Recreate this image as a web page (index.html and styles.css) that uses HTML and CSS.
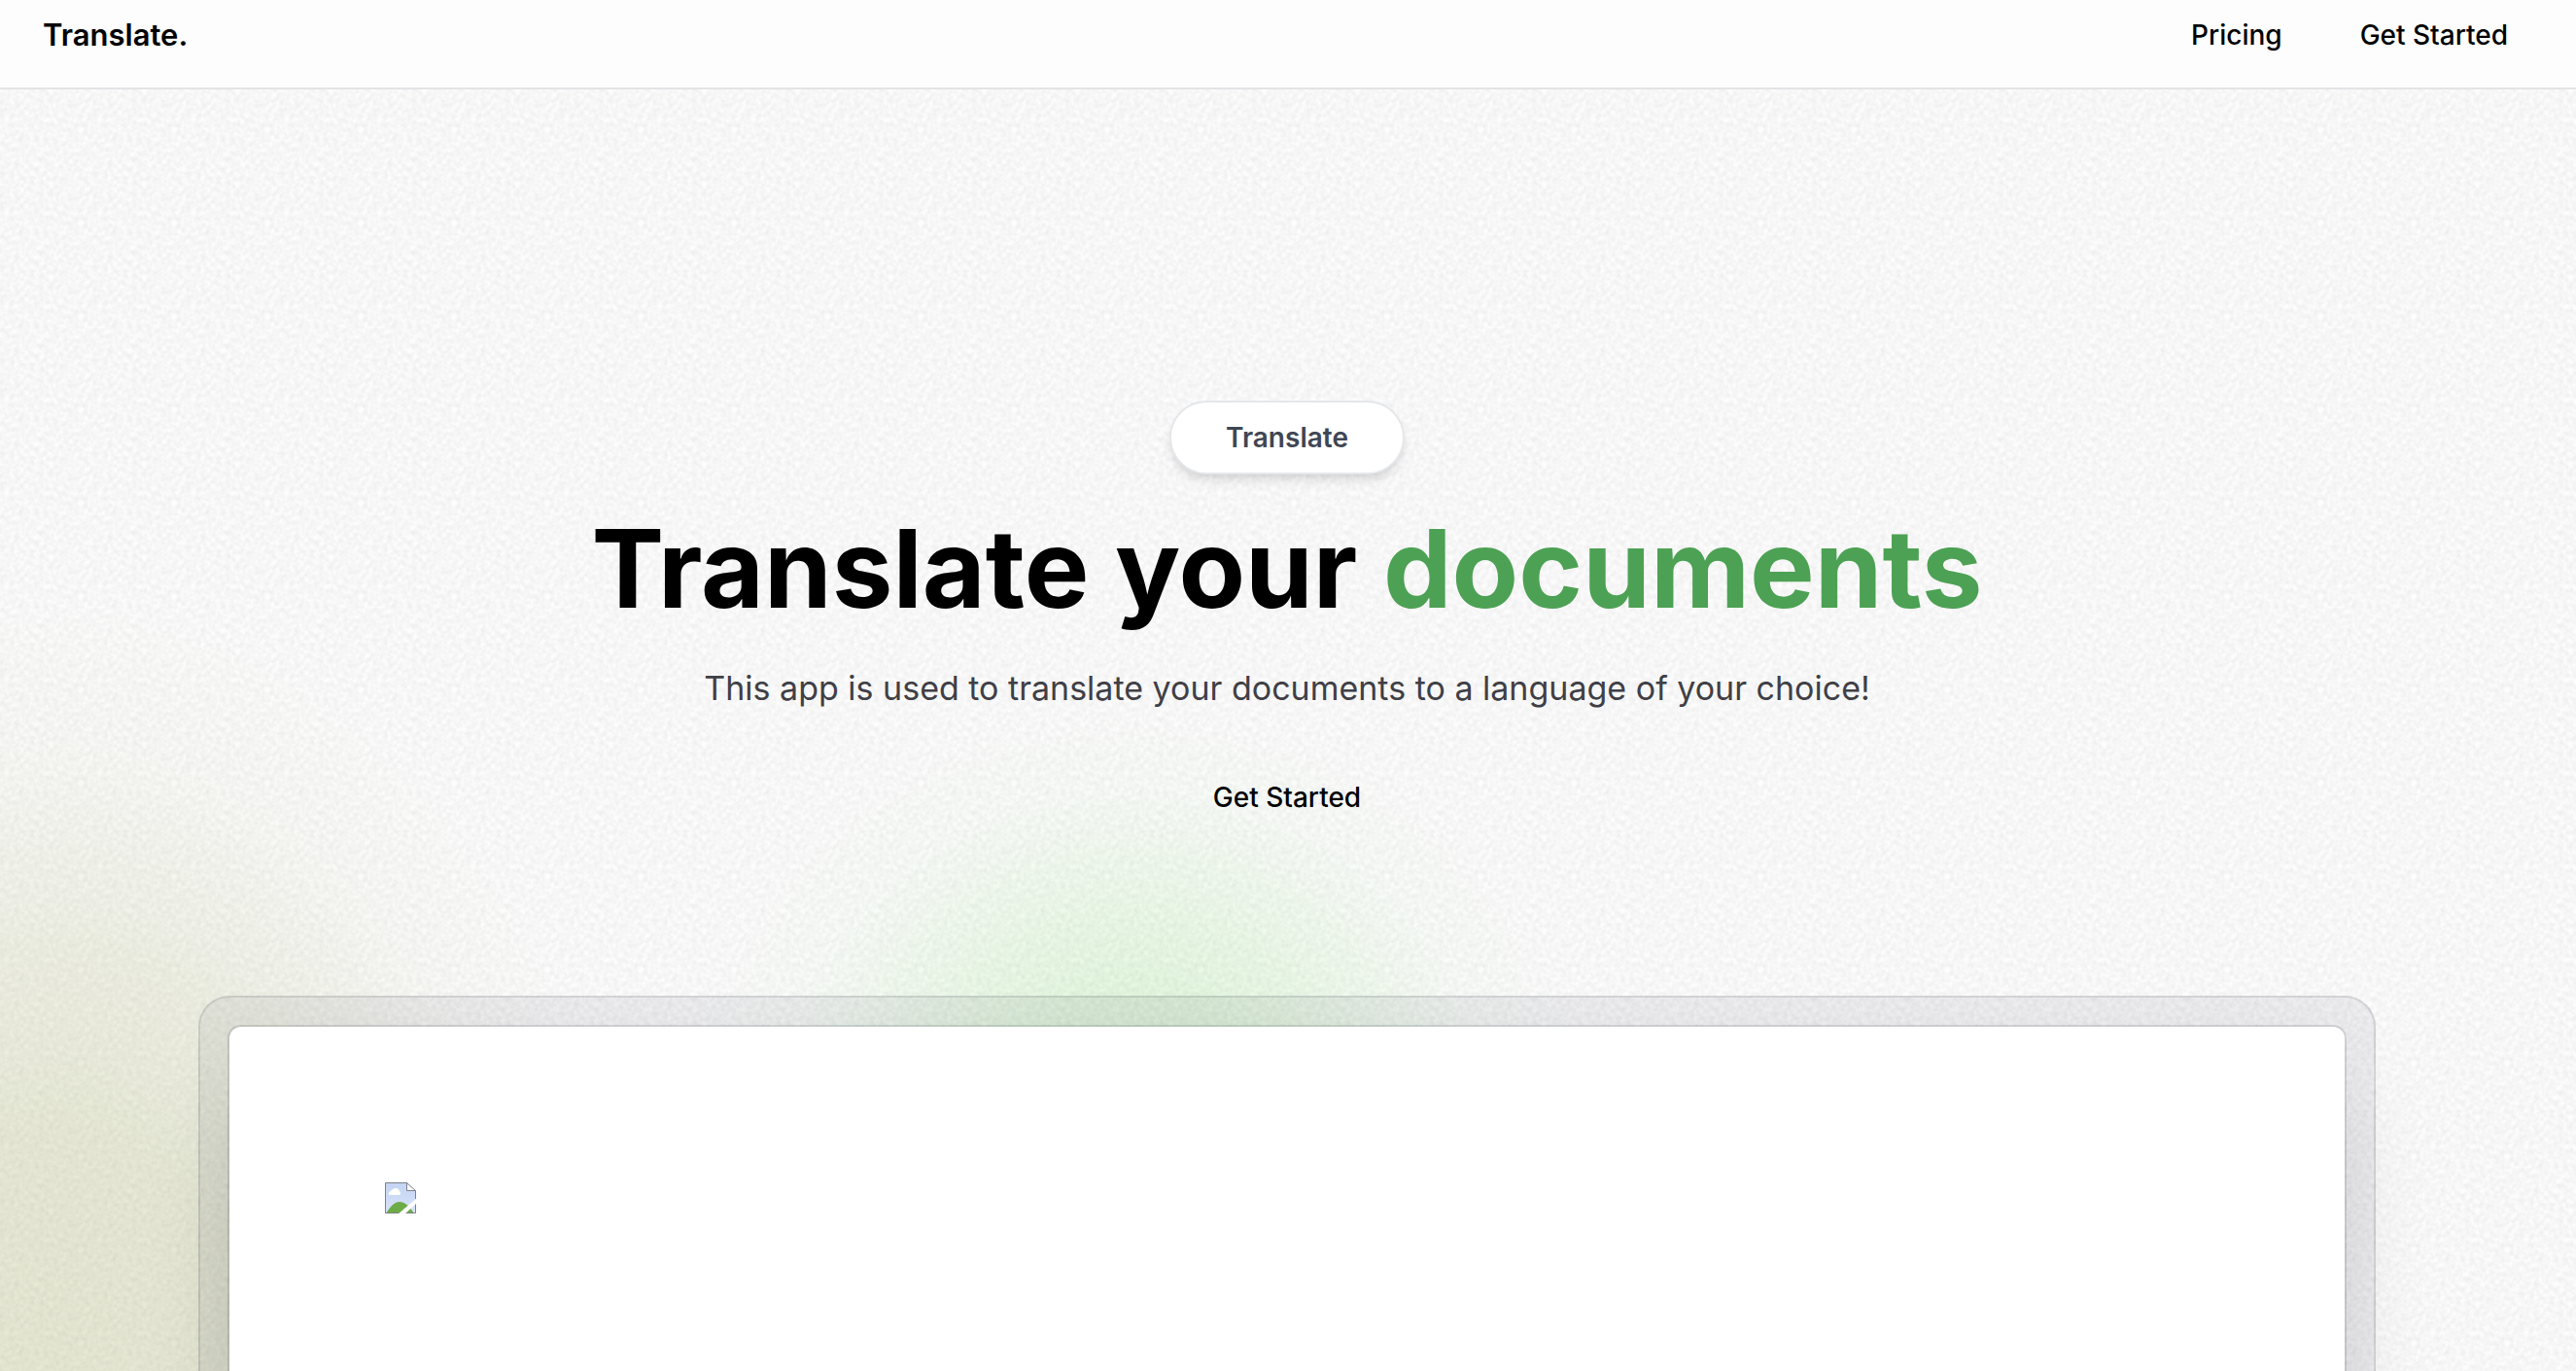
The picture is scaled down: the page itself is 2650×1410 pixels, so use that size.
FILE: index.html
```html
<!DOCTYPE html>
<html lang="en">
<head>
  <meta charset="utf-8">
  <meta name="viewport" content="width=device-width, initial-scale=1">
  <title>Translate.</title>
  <link rel="stylesheet" href="styles.css">
</head>
<body>
  <div class="page">
    <header class="navbar">
      <a class="logo" href="#">Translate.</a>
      <nav class="nav-links">
        <a class="button" href="#pricing">Pricing</a>
        <a class="button" href="#start">Get Started</a>
      </nav>
    </header>
    <main class="hero">
      <p class="pill">Translate</p>
      <h1 class="title">Translate your <span class="accent">documents</span></h1>
      <p class="subtitle">This app is used to translate your documents to a language of your choice!</p>
      <a class="button hero-button" href="#start">Get Started</a>
      <section class="frame" aria-label="Product preview">
        <div class="preview">
          <svg class="missing-image" viewBox="0 0 32 32" role="img" aria-label="Product preview image">
            <defs>
              <linearGradient id="sky" x1="0" y1="0" x2="0" y2="1">
                <stop offset="0" stop-color="#c3d3f3"/>
                <stop offset="1" stop-color="#d9e4fa"/>
              </linearGradient>
            </defs>
            <path d="M0 0H22L32 9V32H0Z" fill="url(#sky)"/>
            <path d="M1 32C6 24 10 20 15 20S25 24 30 32Z" fill="#6cab46"/>
            <path d="M4 13A3 3 0 0 1 6 9Q8 6 11 6Q14 6 15 9Q17 11 15 13Z" fill="#fff"/>
            <path d="M22 1L31 8H22Z" fill="#fff"/>
            <path d="M.5 31.500V.5H22.500L31.500 8.500V31.500Z M22.500 .5V8.500H31.500" fill="none" stroke="#7d8189"/>
            <path d="M13 33L33 16V21L20 33Z" fill="#fff"/>
          </svg>
        </div>
      </section>
    </main>
  </div>
</body>
</html>
```
FILE: styles.css
```css
* {
  box-sizing: border-box;
}

body {
  margin: 0;
  font-family: Inter, "Liberation Sans", sans-serif;
  color: #000;
}

a {
  color: inherit;
  text-decoration: none;
}

.page {
  display: flex;
  flex-direction: column;
  min-height: 100vh;
  overflow: hidden;
  background:
    url("data:image/svg+xml,%3Csvg xmlns='http://www.w3.org/2000/svg' width='96' height='96'%3E%3Cfilter id='n' x='0' y='0' width='100%25' height='100%25' color-interpolation-filters='sRGB'%3E%3CfeTurbulence type='fractalNoise' baseFrequency='.2' numOctaves='2' stitchTiles='stitch'/%3E%3CfeColorMatrix values='0 0 0 0 0 0 0 0 0 0 0 0 0 0 0 .09 0 0 0 -.02'/%3E%3C/filter%3E%3Crect width='96' height='96' filter='url(%23n)'/%3E%3C/svg%3E"),
    radial-gradient(460px 400px at 44% 1120px, rgb(200 243 190 / 56%), rgb(200 243 190 / 46%) 25%, rgb(200 243 190 / 28%) 50%, rgb(200 243 190 / 8%) 75%, transparent),
    radial-gradient(600px 780px at 2% 1400px, rgb(212 216 178 / 55%), rgb(212 216 178 / 50%) 30%, rgb(212 216 178 / 32%) 55%, rgb(212 216 178 / 8%) 80%, transparent),
    #fdfdfd;
}

.navbar {
  display: flex;
  justify-content: space-between;
  align-items: flex-start;
  height: 92px;
  padding: 16px 70px 0 44px;
  background: #fdfdfd;
  border-bottom: 2px solid #e4e4e7;
}

.logo {
  font-size: 31px;
  line-height: 40px;
  font-weight: 600;
}

.nav-links {
  display: flex;
  gap: 80px;
}

.button {
  font-size: 28px;
  line-height: 40px;
  font-weight: 500;
}

.hero {
  flex: 1;
  display: flex;
  flex-direction: column;
  align-items: center;
  padding: 320px 206px 0 204px;
}

.pill {
  margin: 0;
  padding: 16px 56px;
  border: 2px solid #e5e7eb;
  border-radius: 40px;
  background: #fff;
  box-shadow: 0 8px 12px -2px rgb(0 0 0 / 10%), 0 4px 8px -4px rgb(0 0 0 / 10%);
  font-size: 28px;
  line-height: 40px;
  font-weight: 600;
  color: #3f4654;
}

.title {
  margin: 36px 0 0;
  font-size: 112px;
  line-height: 120px;
  font-weight: 700;
}

.accent {
  color: #4da154;
}

.subtitle {
  margin: 36px 0 0;
  font-size: 34px;
  line-height: 56px;
  color: #3f3f46;
}

.hero-button {
  margin-top: 64px;
}

.frame {
  flex: 1;
  align-self: stretch;
  display: flex;
  margin: 184px 0 -160px;
  padding: 32px;
  border-radius: 32px;
  background: rgb(24 24 48 / 6%);
  box-shadow: inset 0 0 0 2px rgb(17 24 39 / 10%);
}

.preview {
  flex: 1;
  padding: 160px;
  border-radius: 12px;
  background: #fff;
  box-shadow: 0 0 0 2px rgb(17 24 39 / 12%), 0 50px 100px -24px rgb(0 0 0 / 18%);
}

.missing-image {
  display: block;
  width: 32px;
  height: 32px;
}
```
